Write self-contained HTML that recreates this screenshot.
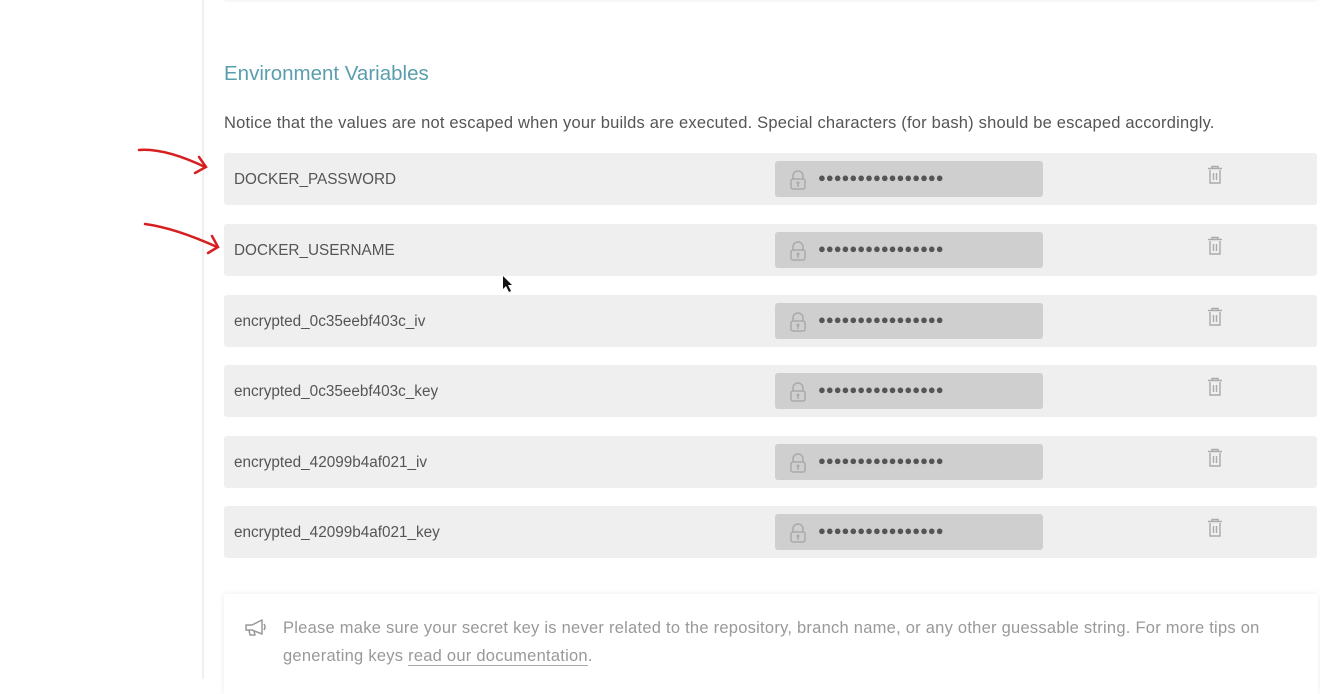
<!DOCTYPE html>
<html><head><meta charset="utf-8"><style>
body{margin:0;width:1320px;height:679px;background:#fff;position:relative;overflow:hidden;font-family:"Liberation Sans",sans-serif;}
.vl{position:absolute;left:202px;top:0;width:2px;height:679px;background:#f0f0f0;}
.topc{position:absolute;left:224px;top:-10px;width:1094px;height:10px;box-shadow:0 1px 3px rgba(0,0,0,.06);}
h2{position:absolute;left:224px;top:62px;margin:0;font-weight:normal;font-size:20.5px;color:#5a9ead;}
.note{position:absolute;left:224px;top:114px;font-size:16.5px;color:#555;letter-spacing:0.2px;white-space:nowrap;}
.row{position:absolute;left:224px;width:1093px;height:52px;background:#efefef;border-radius:3px;}
.row .n{position:absolute;left:10px;top:18px;font-size:15.3px;color:#555;}
.row .v{position:absolute;left:551px;top:8px;width:268px;height:36px;background:#cfcfcf;border-radius:3px;}
.row .v svg{position:absolute;left:14px;top:9px;}
.row .d{position:absolute;left:43px;top:9px;font-size:13px;color:#555;letter-spacing:0px;}
.row .t{position:absolute;left:983px;top:12px;}
.info{position:absolute;left:224px;top:594px;width:1094px;height:100px;background:#fff;box-shadow:0 0 6px rgba(0,0,0,.08);}
.info p{position:absolute;left:59px;top:20px;margin:0;font-size:16.5px;line-height:28px;color:#999;width:1010px;letter-spacing:0.25px;}
.info a{color:#999;text-decoration:none;border-bottom:1px solid #aaa;}
</style></head><body>
<div class="vl"></div><div class="topc"></div>
<h2>Environment Variables</h2>
<div class="note">Notice that the values are not escaped when your builds are executed. Special characters (for bash) should be escaped accordingly.</div>

<svg style="position:absolute;left:0;top:0" width="240" height="270">
<path d="M139 150 Q165 148 205 167" stroke="#d62020" stroke-width="2.5" fill="none" stroke-linecap="round"/>
<path d="M195 173 L206 167 L199 157" stroke="#d62020" stroke-width="2.5" fill="none" stroke-linecap="round"/>
<path d="M145 224 Q175 228 217 247" stroke="#d62020" stroke-width="2.5" fill="none" stroke-linecap="round"/>
<path d="M208 253 L218 247 L212 236" stroke="#d62020" stroke-width="2.5" fill="none" stroke-linecap="round"/>
</svg>

<div class="row" style="top:153px"><div class="n">DOCKER_PASSWORD</div><div class="v"><svg width="18" height="20" viewBox="0 0 18 20"><path d="M4 9V6a5 5 0 0 1 10 0v3" stroke="#aaa" stroke-width="1.5" fill="none"/><rect x="2" y="9" width="14" height="10" rx="2" stroke="#aaa" stroke-width="1.5" fill="none"/><circle cx="9" cy="13" r="1.5" fill="#aaa"/><path d="M9 14v3" stroke="#aaa" stroke-width="1.5"/></svg><div class="d">●●●●●●●●●●●●●●●●</div></div><svg class="t" width="16" height="20" viewBox="0 0 16 20"><path d="M5 3V1.5h6V3M1 3.5h14M3 5v13h10V5M6.5 8v7M9.5 8v7" stroke="#aaa" stroke-width="1.4" fill="none"/></svg></div>
<div class="row" style="top:224px"><div class="n">DOCKER_USERNAME</div><div class="v"><svg width="18" height="20" viewBox="0 0 18 20"><path d="M4 9V6a5 5 0 0 1 10 0v3" stroke="#aaa" stroke-width="1.5" fill="none"/><rect x="2" y="9" width="14" height="10" rx="2" stroke="#aaa" stroke-width="1.5" fill="none"/><circle cx="9" cy="13" r="1.5" fill="#aaa"/><path d="M9 14v3" stroke="#aaa" stroke-width="1.5"/></svg><div class="d">●●●●●●●●●●●●●●●●</div></div><svg class="t" width="16" height="20" viewBox="0 0 16 20"><path d="M5 3V1.5h6V3M1 3.5h14M3 5v13h10V5M6.5 8v7M9.5 8v7" stroke="#aaa" stroke-width="1.4" fill="none"/></svg></div>
<div class="row" style="top:295px"><div class="n">encrypted_0c35eebf403c_iv</div><div class="v"><svg width="18" height="20" viewBox="0 0 18 20"><path d="M4 9V6a5 5 0 0 1 10 0v3" stroke="#aaa" stroke-width="1.5" fill="none"/><rect x="2" y="9" width="14" height="10" rx="2" stroke="#aaa" stroke-width="1.5" fill="none"/><circle cx="9" cy="13" r="1.5" fill="#aaa"/><path d="M9 14v3" stroke="#aaa" stroke-width="1.5"/></svg><div class="d">●●●●●●●●●●●●●●●●</div></div><svg class="t" width="16" height="20" viewBox="0 0 16 20"><path d="M5 3V1.5h6V3M1 3.5h14M3 5v13h10V5M6.5 8v7M9.5 8v7" stroke="#aaa" stroke-width="1.4" fill="none"/></svg></div>
<div class="row" style="top:365px"><div class="n">encrypted_0c35eebf403c_key</div><div class="v"><svg width="18" height="20" viewBox="0 0 18 20"><path d="M4 9V6a5 5 0 0 1 10 0v3" stroke="#aaa" stroke-width="1.5" fill="none"/><rect x="2" y="9" width="14" height="10" rx="2" stroke="#aaa" stroke-width="1.5" fill="none"/><circle cx="9" cy="13" r="1.5" fill="#aaa"/><path d="M9 14v3" stroke="#aaa" stroke-width="1.5"/></svg><div class="d">●●●●●●●●●●●●●●●●</div></div><svg class="t" width="16" height="20" viewBox="0 0 16 20"><path d="M5 3V1.5h6V3M1 3.5h14M3 5v13h10V5M6.5 8v7M9.5 8v7" stroke="#aaa" stroke-width="1.4" fill="none"/></svg></div>
<div class="row" style="top:436px"><div class="n">encrypted_42099b4af021_iv</div><div class="v"><svg width="18" height="20" viewBox="0 0 18 20"><path d="M4 9V6a5 5 0 0 1 10 0v3" stroke="#aaa" stroke-width="1.5" fill="none"/><rect x="2" y="9" width="14" height="10" rx="2" stroke="#aaa" stroke-width="1.5" fill="none"/><circle cx="9" cy="13" r="1.5" fill="#aaa"/><path d="M9 14v3" stroke="#aaa" stroke-width="1.5"/></svg><div class="d">●●●●●●●●●●●●●●●●</div></div><svg class="t" width="16" height="20" viewBox="0 0 16 20"><path d="M5 3V1.5h6V3M1 3.5h14M3 5v13h10V5M6.5 8v7M9.5 8v7" stroke="#aaa" stroke-width="1.4" fill="none"/></svg></div>
<div class="row" style="top:506px"><div class="n">encrypted_42099b4af021_key</div><div class="v"><svg width="18" height="20" viewBox="0 0 18 20"><path d="M4 9V6a5 5 0 0 1 10 0v3" stroke="#aaa" stroke-width="1.5" fill="none"/><rect x="2" y="9" width="14" height="10" rx="2" stroke="#aaa" stroke-width="1.5" fill="none"/><circle cx="9" cy="13" r="1.5" fill="#aaa"/><path d="M9 14v3" stroke="#aaa" stroke-width="1.5"/></svg><div class="d">●●●●●●●●●●●●●●●●</div></div><svg class="t" width="16" height="20" viewBox="0 0 16 20"><path d="M5 3V1.5h6V3M1 3.5h14M3 5v13h10V5M6.5 8v7M9.5 8v7" stroke="#aaa" stroke-width="1.4" fill="none"/></svg></div>

<svg style="position:absolute;left:502px;top:275px" width="12" height="18" viewBox="0 0 12 18"><path d="M1 1v13l3-3 3 6 2-1-3-6h4z" fill="#111"/></svg>

<div class="info">
<svg style="position:absolute;left:20px;top:24px" width="26" height="20" viewBox="0 0 26 20"><path d="M2 7h6l10-5v14L8 12H2z M5 12l1 5h5l-1-4" stroke="#999" stroke-width="1.5" fill="none" stroke-linejoin="round"/><path d="M20 6q2 3 0 6" stroke="#999" stroke-width="1.5" fill="none"/></svg>
<p>Please make sure your secret key is never related to the repository, branch name, or any other guessable string. For more tips on generating keys <a>read our documentation</a>.</p>
</div>
</body></html>
